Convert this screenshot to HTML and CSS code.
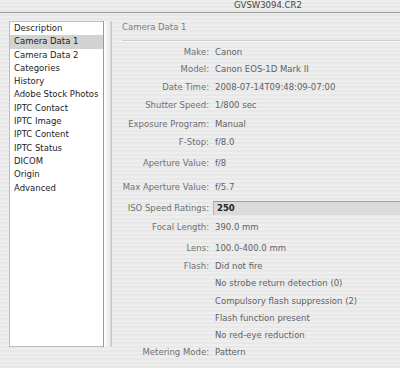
FILE: index.html
```html
<!DOCTYPE html>
<html lang="en">
<head>
    <meta charset="UTF-8">
    <meta name="viewport" content="width=device-width, initial-scale=1.0">
    <title>GVSW3094.CR2 | File Info</title>
    <link rel="stylesheet" href="styles.css">
</head>
<body>
    <!-- Window title -->
    <div class="titlebar">
        <span class="title">GVSW3094.CR2</span>
    </div>

    <div class="window">
        <!-- Panel list -->
        <div class="sidebar">
            <ul class="panels">
                <li>Description</li>
                <li class="selected">Camera Data 1</li>
                <li>Camera Data 2</li>
                <li>Categories</li>
                <li>History</li>
                <li>Adobe Stock Photos</li>
                <li>IPTC Contact</li>
                <li>IPTC Image</li>
                <li>IPTC Content</li>
                <li>IPTC Status</li>
                <li>DICOM</li>
                <li>Origin</li>
                <li>Advanced</li>
            </ul>
            <div class="scroller"></div>
        </div>

        <!-- Panel content -->
        <div class="content">
            <div class="section-title">Camera Data 1</div>
            <dl class="fields">
                <dt>Make:</dt><dd>Canon</dd>
                <dt>Model:</dt><dd>Canon EOS-1D Mark II</dd>
                <dt>Date Time:</dt><dd>2008-07-14T09:48:09-07:00</dd>
                <dt>Shutter Speed:</dt><dd>1/800 sec</dd>
                <dt>Exposure Program:</dt><dd>Manual</dd>
                <dt>F-Stop:</dt><dd>f/8.0</dd>
                <dt>Aperture Value:</dt><dd>f/8</dd>
                <dt>Max Aperture Value:</dt><dd>f/5.7</dd>
                <dt>ISO Speed Ratings:</dt><dd class="editable">250</dd>
                <dt>Focal Length:</dt><dd>390.0 mm</dd>
                <dt>Lens:</dt><dd>100.0-400.0 mm</dd>
                <dt>Flash:</dt><dd>Did not fire</dd>
                <dd class="cont">No strobe return detection (0)</dd>
                <dd class="cont">Compulsory flash suppression (2)</dd>
                <dd class="cont">Flash function present</dd>
                <dd class="cont">No red-eye reduction</dd>
                <dt>Metering Mode:</dt><dd>Pattern</dd>
            </dl>
        </div>
    </div>
</body>
</html>
```

FILE: styles.css
```css
* {
    box-sizing: border-box;
    margin: 0;
    padding: 0;
}

body {
    font-family: "DejaVu Sans", "Lucida Grande", sans-serif;
    font-size: 8.5px;
    color: #666;
    background: repeating-linear-gradient(to bottom, #eeeeee 0, #eeeeee 2px, #e8e8e8 2px, #e8e8e8 4px);
    height: 368px;
    overflow: hidden;
}

/* Title bar */
.titlebar {
    height: 13px;
    line-height: 11px;
    border-bottom: 1px solid #9d9d9d;
    padding-left: 234px;
}

.title {
    color: #444;
}

.window {
    display: flex;
    padding-top: 8px;
}

/* Panel list */
.sidebar {
    display: flex;
    margin-left: 9px;
    height: 326px;
}

.panels {
    list-style: none;
    width: 94px;
    background: #fff;
    border: 1px solid #bdbdbd;
    border-right: none;
}

.panels li {
    line-height: 13.3px;
    padding-left: 4px;
    color: #1c1c1c;
    white-space: nowrap;
}

.panels li.selected {
    background: #d2d2d2;
}

.scroller {
    width: 9px;
    border-left: 1px solid #9a9a9a;
    border-right: 1px solid #c4c4c4;
    background: linear-gradient(to right, #fdfdfd, #ececec 70%, #dcdcdc);
}

/* Panel content */
.content {
    flex: 1;
    margin-left: 10px;
}

.section-title {
    line-height: 13px;
    padding-bottom: 6px;
    color: #7c7c7c;
    border-bottom: 1px solid #cfcfcf;
    box-shadow: 0 1px 0 #f8f8f8;
}

.fields {
    display: grid;
    grid-template-columns: 87px 1fr;
    grid-template-rows: 17px 18px 18px 19px 18px 21px 24px 21px 19px 21px 18px 17px 18px 17px 17px 17px 14px;
    column-gap: 4px;
    margin-top: 4px;
}

.fields dt,
.fields dd {
    line-height: 14px;
    align-self: start;
    white-space: nowrap;
}

.fields dt {
    text-align: right;
    color: #707070;
}

.fields dd {
    padding-left: 2px;
    color: #626262;
}

.fields dd.cont {
    grid-column: 2;
}

.fields dd.editable {
    height: 14px;
    line-height: 13px;
    padding-left: 3px;
    background: #dadada;
    border-top: 1px solid #9e9e9e;
    border-left: 1px solid #b4b4b4;
    color: #222;
    font-weight: bold;
}
```
